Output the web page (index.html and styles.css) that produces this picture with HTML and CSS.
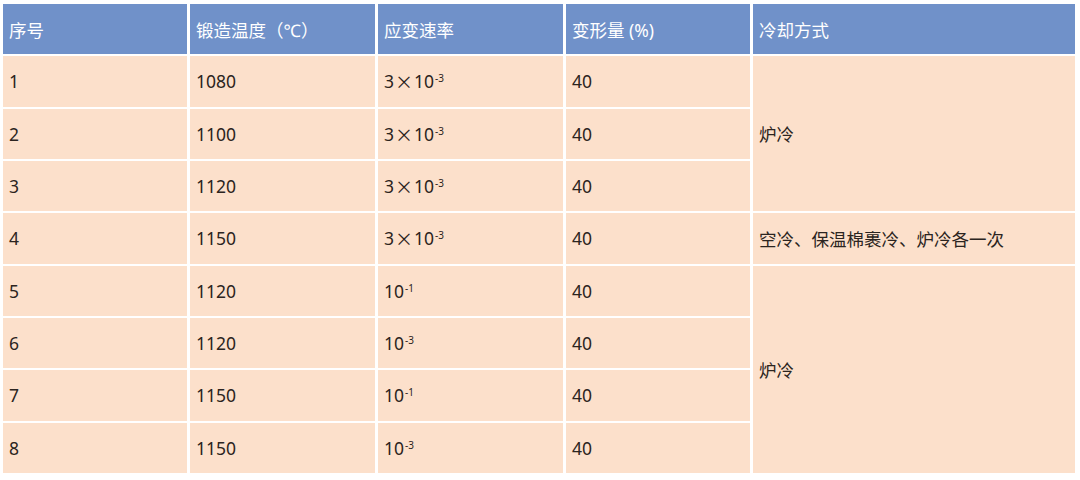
FILE: index.html
```html
<!DOCTYPE html>
<html lang="zh">
<head>
<meta charset="utf-8">
<link rel="stylesheet" href="styles.css">
</head>
<body>
<div class="table">
  <div class="cell head">序号</div>
  <div class="cell head">锻造温度（℃）</div>
  <div class="cell head">应变速率</div>
  <div class="cell head">变形量 (%)</div>
  <div class="cell head">冷却方式</div>

  <div class="cell">1</div>
  <div class="cell">1080</div>
  <div class="cell">3<span class="times">×</span>10<sup>-3</sup></div>
  <div class="cell">40</div>
  <div class="cell span3">炉冷</div>

  <div class="cell">2</div>
  <div class="cell">1100</div>
  <div class="cell">3<span class="times">×</span>10<sup>-3</sup></div>
  <div class="cell">40</div>

  <div class="cell">3</div>
  <div class="cell">1120</div>
  <div class="cell">3<span class="times">×</span>10<sup>-3</sup></div>
  <div class="cell">40</div>

  <div class="cell">4</div>
  <div class="cell">1150</div>
  <div class="cell">3<span class="times">×</span>10<sup>-3</sup></div>
  <div class="cell">40</div>
  <div class="cell">空冷、保温棉裹冷、炉冷各一次</div>

  <div class="cell">5</div>
  <div class="cell">1120</div>
  <div class="cell">10<sup>-1</sup></div>
  <div class="cell">40</div>
  <div class="cell span4">炉冷</div>

  <div class="cell">6</div>
  <div class="cell">1120</div>
  <div class="cell">10<sup>-3</sup></div>
  <div class="cell">40</div>

  <div class="cell">7</div>
  <div class="cell">1150</div>
  <div class="cell">10<sup>-1</sup></div>
  <div class="cell">40</div>

  <div class="cell">8</div>
  <div class="cell">1150</div>
  <div class="cell">10<sup>-3</sup></div>
  <div class="cell">40</div>
</div>
</body>
</html>
```
FILE: styles.css
```css
html, body {
  margin: 0;
  padding: 0;
  background: #ffffff;
}
body {
  padding: 4px 0 0 3px;
  font-family: "Noto Sans", "Noto Sans CJK SC", sans-serif;
}
.table {
  display: grid;
  grid-template-columns: 184px 185px 185px 184px 322px;
  grid-template-rows: repeat(9, 1fr);
  column-gap: 3px;
  row-gap: 2px;
  width: 1072px;
  height: 469px;
}
.cell {
  background: #fce0cb;
  color: #2b2420;
  font-size: 17.5px;
  display: flex;
  align-items: center;
  padding-left: 6px;
  white-space: nowrap;
}
.head {
  background: #7091c9;
  color: #ffffff;
}
.span3 {
  grid-row: span 3;
}
.span4 {
  grid-row: span 4;
}
.times {
  font-family: "Noto Sans CJK SC", sans-serif;
  font-size: 18px;
  margin: 0 1px;
}
sup {
  font-size: 10px;
  line-height: 1;
  position: relative;
  top: -3px;
  margin-left: 1px;
}
```
